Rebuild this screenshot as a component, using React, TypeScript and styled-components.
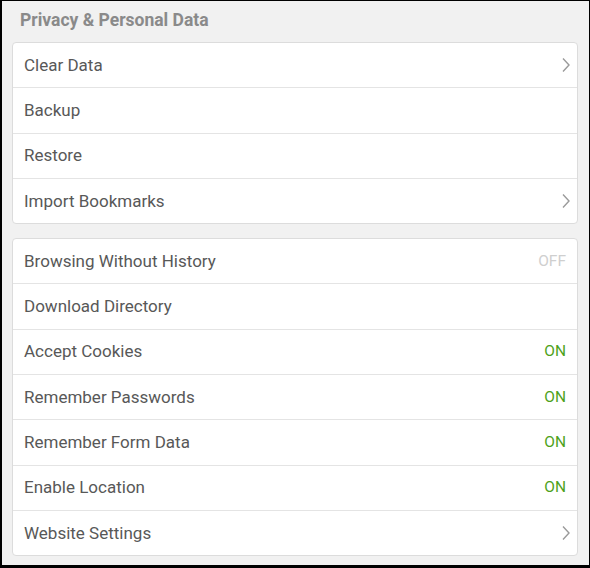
import React from "react";
import styled, { createGlobalStyle } from "styled-components";

const Global = createGlobalStyle`
  html, body { margin: 0; padding: 0; }
  body { font-family: Roboto, "Noto Sans", sans-serif; }
  * { box-sizing: border-box; }
`;

const Frame = styled.div`
  width: 590px;
  height: 568px;
  background: #f1f1f1;
  border-style: solid;
  border-color: #000;
  border-width: 1px 1px 3px 2px;
  padding: 0 11px 0 10px;
  display: flex;
  flex-direction: column;
`;

const Title = styled.div`
  font-size: 17.5px;
  font-weight: 700;
  color: #8a8a8a;
  height: 41px;
  padding: 9px 0 0 8px;
  line-height: 20px;
`;

const Card = styled.div<{ $mb?: number }>`
  background: #fff;
  border: 1px solid #dcdcdc;
  border-radius: 4px;
  display: flex;
  flex-direction: column;
  margin-bottom: ${(p) => p.$mb ?? 0}px;
`;

const Row = styled.div`
  height: 45.3px;
  display: flex;
  align-items: center;
  justify-content: space-between;
  padding: 0 11px 1px 11px;
  border-top: 1px solid #e4e4e4;
  &:first-child { border-top: none; height: 44.3px; }
`;

const Label = styled.span`
  font-size: 17px;
  color: #585858;
`;

const State = styled.span<{ $on: boolean }>`
  font-size: 15.5px;
  color: ${(p) => (p.$on ? "#4ea21b" : "#cfcfcf")};
  margin-right: 0;
`;

const ChevronSvg = styled.svg`
  margin-right: -5px;
`;

const Chevron = () => (
  <ChevronSvg width="10" height="16" viewBox="0 0 10 16">
    <path d="M2 1.5 L8 8 L2 14.5" fill="none" stroke="#9a9a9a" strokeWidth="1.4" />
  </ChevronSvg>
);

type Item = { label: string; right?: "chev" | "on" | "off" };

const card1: Item[] = [
  { label: "Clear Data", right: "chev" },
  { label: "Backup" },
  { label: "Restore" },
  { label: "Import Bookmarks", right: "chev" },
];

const card2: Item[] = [
  { label: "Browsing Without History", right: "off" },
  { label: "Download Directory" },
  { label: "Accept Cookies", right: "on" },
  { label: "Remember Passwords", right: "on" },
  { label: "Remember Form Data", right: "on" },
  { label: "Enable Location", right: "on" },
  { label: "Website Settings", right: "chev" },
];

const renderRow = (it: Item) => (
  <Row key={it.label}>
    <Label>{it.label}</Label>
    {it.right === "chev" && <Chevron />}
    {it.right === "on" && <State $on>ON</State>}
    {it.right === "off" && <State $on={false}>OFF</State>}
  </Row>
);

export default function App() {
  return (
    <>
      <Global />
      <Frame>
        <Title>Privacy &amp; Personal Data</Title>
        <Card $mb={14}>{card1.map(renderRow)}</Card>
        <Card>{card2.map(renderRow)}</Card>
      </Frame>
    </>
  );
}
